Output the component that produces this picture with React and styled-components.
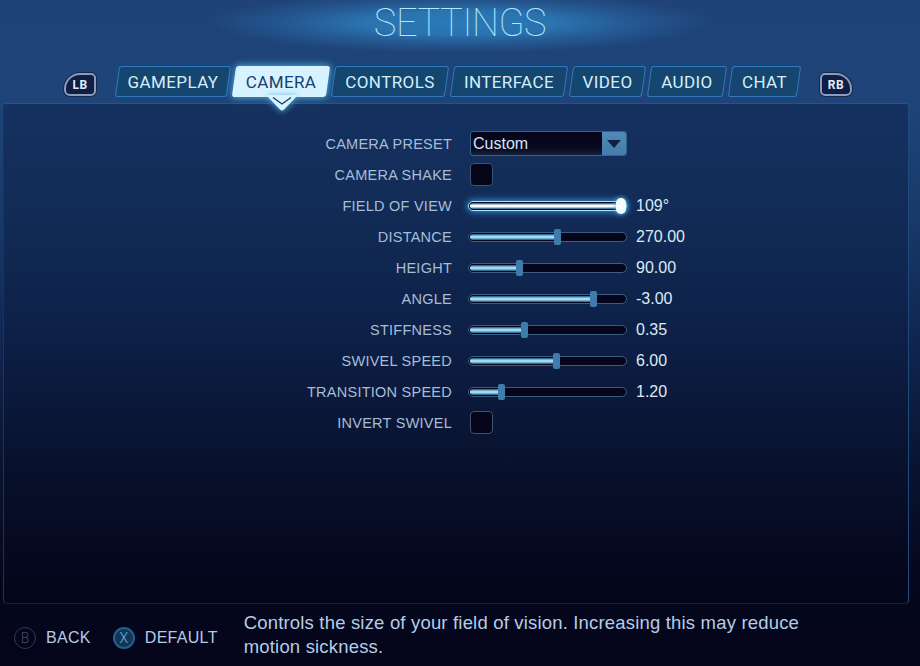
import React from 'react'
import styled, { createGlobalStyle, css } from 'styled-components'

const GlobalStyle = createGlobalStyle`
  html, body {
    margin: 0;
    padding: 0;
    background: #05061a;
  }
`

const Page = styled.div`
  width: 920px;
  height: 666px;
  overflow: hidden;
  display: flex;
  flex-direction: column;
  font-family: "Liberation Sans", Arial, sans-serif;
  background: linear-gradient(
    180deg,
    #1f4379 0%,
    #1e4479 16%,
    #183a6a 32%,
    #0f2550 52%,
    #091430 70%,
    #05071e 86%,
    #04051a 100%
  );
`

const Header = styled.header`
  height: 66px;
  display: flex;
  justify-content: center;
  align-items: flex-start;
  background: radial-gradient(
    ellipse 250px 30px at 460px 23px,
    #2b79b6 0%,
    #2a74b0 38%,
    rgba(42, 105, 165, 0.55) 68%,
    rgba(42, 100, 160, 0) 100%
  );
`

const Title = styled.h1`
  margin: 0;
  font-family: Roboto, sans-serif;
  font-weight: 100;
  font-size: 38px;
  line-height: 47px;
  letter-spacing: -0.4px;
  color: #b4e8fc;
`

const TabRow = styled.nav`
  height: 31px;
  margin-bottom: 6px;
  padding-left: 64px;
  display: flex;
  align-items: stretch;
  position: relative;
  z-index: 2;
`

const Tabs = styled.div`
  margin: 0 21px 0 21px;
  display: flex;
  gap: 5px;
`

const Tab = styled.div`
  position: relative;
  isolation: isolate;
  width: ${p => p.$width}px;
  display: flex;
  align-items: center;
  justify-content: center;
  font-family: Roboto, sans-serif;
  font-size: 17px;
  letter-spacing: 0.4px;
  color: ${p => (p.$active ? '#16406f' : '#d5eefa')};

  &::before {
    content: '';
    position: absolute;
    inset: 0;
    z-index: -1;
    transform: skewX(-8deg);
    border-radius: 3px;
    ${p =>
      p.$active
        ? css`
            background: #d6f3ff;
            box-shadow: 0 0 7px 1px #4aa7dc;
          `
        : css`
            background: #14466f;
            border: 1px solid #2e7cbd;
          `}
  }
`

const TabPointer = styled.svg`
  position: absolute;
  left: 50%;
  top: 100%;
  width: 38px;
  height: 17px;
  margin-left: -18px;
  margin-top: -2px;
  filter: drop-shadow(0 1px 3px #4aa7dc);
`

const Bumper = styled.div`
  align-self: flex-end;
  margin-bottom: 1px;
  width: 32px;
  height: 23px;
  box-sizing: border-box;
  display: flex;
  align-items: center;
  justify-content: center;
  font-family: Roboto, sans-serif;
  font-size: 12px;
  font-weight: 700;
  letter-spacing: 0.5px;
  color: #e4ebf4;
  background: #101d45;
  border: 2px solid #8b9cb8;
  border-radius: ${p => (p.$right ? '5px 16px 6px 5px' : '16px 5px 5px 6px')};
  box-shadow: 0 0 0 1px #16294f;
`

const Panel = styled.main`
  flex: 1;
  margin: 0 11px 0 3px;
  padding-top: 24px;
  border: 1px solid #25548a;
  border-radius: 4px;
  background: linear-gradient(
    180deg,
    rgba(8, 22, 60, 0.42) 0%,
    rgba(8, 18, 48, 0.35) 50%,
    rgba(3, 4, 22, 0.3) 100%
  );
  border-color: #25548a #1f4a7e #0e2240 #163560;
  display: flex;
  flex-direction: column;
`

const Row = styled.div`
  height: 31px;
  display: grid;
  grid-template-columns: 448px 158px auto;
  column-gap: 17px;
  align-items: center;
`

const Label = styled.label`
  text-align: right;
  font-size: 14.5px;
  letter-spacing: 0.25px;
  color: #a6bdd6;
`

const Value = styled.span`
  margin-left: -8px;
  font-size: 16px;
  color: #dde9f4;
`

const Select = styled.div`
  height: 25px;
  margin-left: 1px;
  box-sizing: border-box;
  display: flex;
  align-items: stretch;
  border-radius: 3px;
  border: 1px solid #35618c;
  background: linear-gradient(180deg, #04041a 0%, #08081f 70%, #14203a 100%);
  overflow: hidden;
`

const SelectText = styled.span`
  flex: 1;
  padding-left: 2px;
  line-height: 23px;
  font-size: 16px;
  color: #d6e6f5;
`

const SelectButton = styled.span`
  width: 24px;
  display: flex;
  align-items: center;
  justify-content: center;
  background: linear-gradient(180deg, #4f8ab9 0%, #447cab 100%);

  &::after {
    content: '';
    border-left: 7px solid transparent;
    border-right: 7px solid transparent;
    border-top: 8px solid #10213f;
  }
`

const Checkbox = styled.div`
  width: 23px;
  height: 23px;
  margin-left: 1px;
  box-sizing: border-box;
  border: 1px solid #3d536f;
  border-radius: 4px;
  background: #05051a;
`

const Track = styled.div`
  position: relative;
  height: 10px;
  box-sizing: border-box;
  margin-left: -1px;
  padding: 1px;
  border: 1px solid ${p => (p.$focused ? '#a8e4fa' : '#3f5c7e')};
  border-radius: 5px;
  background: #05061c;
  box-shadow: ${p => (p.$focused ? '0 0 6px 1px #2f95d6' : 'none')};
`

const Fill = styled.div`
  height: 100%;
  border-radius: 4px 0 0 4px;
  background: linear-gradient(
    180deg,
    #1c4f7b 0%,
    ${p => (p.$focused ? '#f4fcff' : '#9edcf4')} 38%,
    ${p => (p.$focused ? '#f4fcff' : '#9edcf4')} 62%,
    #1c4f7b 100%
  );
`

const Thumb = styled.div`
  position: absolute;
  top: -4px;
  width: ${p => (p.$focused ? 10 : 7)}px;
  height: 16px;
  margin-left: ${p => (p.$focused ? -5 : -3)}px;
  border-radius: ${p => (p.$focused ? 5 : 2)}px;
  background: ${p => (p.$focused ? '#f6fdff' : '#3f7cab')};
  box-shadow: ${p => (p.$focused ? '0 0 5px #6cc4ef' : 'none')};
`

const Footer = styled.footer`
  height: 62px;
  padding-left: 14px;
  display: flex;
  align-items: center;
`

const Hint = styled.div`
  display: flex;
  align-items: center;
  gap: 10px;
  margin-top: 6px;
  margin-right: ${p => p.$gap}px;
  font-size: 16px;
  letter-spacing: 0.3px;
  color: #b5cbe4;
`

const ButtonGlyph = styled.span`
  width: 22px;
  height: 22px;
  box-sizing: border-box;
  border-radius: 50%;
  display: flex;
  align-items: center;
  justify-content: center;
  font-family: Roboto, sans-serif;
  font-weight: 300;
  font-size: 14px;
  letter-spacing: 0;
  ${p =>
    p.$filled
      ? css`
          border: 2px solid #235f92;
          background: #123653;
          color: #6fb4e2;
        `
      : css`
          border: 1px solid #2c3a52;
          color: #3f5069;
        `}
`

const Description = styled.p`
  margin: 0;
  width: 590px;
  font-size: 18.5px;
  line-height: 24px;
  letter-spacing: 0.18px;
  color: #b5cde6;
`

const tabs = [
  { name: 'GAMEPLAY', width: 112 },
  { name: 'CAMERA', width: 94 },
  { name: 'CONTROLS', width: 114 },
  { name: 'INTERFACE', width: 114 },
  { name: 'VIDEO', width: 73 },
  { name: 'AUDIO', width: 76 },
  { name: 'CHAT', width: 69 },
].map(tab => ({ ...tab, active: tab.name === 'CAMERA' }))

const sliders = [
  { label: 'FIELD OF VIEW', value: '109°', percent: 96.5, focused: true },
  { label: 'DISTANCE', value: '270.00', percent: 56 },
  { label: 'HEIGHT', value: '90.00', percent: 32 },
  { label: 'ANGLE', value: '-3.00', percent: 79 },
  { label: 'STIFFNESS', value: '0.35', percent: 35 },
  { label: 'SWIVEL SPEED', value: '6.00', percent: 55.5 },
  { label: 'TRANSITION SPEED', value: '1.20', percent: 20.5 },
]

const Slider = ({ label, value, percent, focused }) => (
  <Row>
    <Label>{label}</Label>
    <Track $focused={focused}>
      <Fill $focused={focused} style={{ width: `${percent}%` }} />
      <Thumb $focused={focused} style={{ left: `${percent}%` }} />
    </Track>
    <Value>{value}</Value>
  </Row>
)

export default function App() {
  return (
    <Page>
      <GlobalStyle />
      <Header>
        <Title>SETTINGS</Title>
      </Header>
      <TabRow>
        <Bumper>LB</Bumper>
        <Tabs>
          {tabs.map(tab => (
            <Tab key={tab.name} $width={tab.width} $active={tab.active}>
              {tab.name}
              {tab.active && (
                <TabPointer viewBox="0 0 38 17">
                  <path d="M3 0H35L21 14.5Q19 16.5 17 14.5Z" fill="#d6f3ff" />
                  <path d="M10 2.5L19 9L28 2.5" fill="none" stroke="#1d3d6c" strokeWidth="1.4" />
                </TabPointer>
              )}
            </Tab>
          ))}
        </Tabs>
        <Bumper $right>RB</Bumper>
      </TabRow>
      <Panel>
        <Row>
          <Label>CAMERA PRESET</Label>
          <Select>
            <SelectText>Custom</SelectText>
            <SelectButton />
          </Select>
        </Row>
        <Row>
          <Label>CAMERA SHAKE</Label>
          <Checkbox />
        </Row>
        {sliders.map(slider => (
          <Slider key={slider.label} {...slider} />
        ))}
        <Row>
          <Label>INVERT SWIVEL</Label>
          <Checkbox />
        </Row>
      </Panel>
      <Footer>
        <Hint $gap={22}>
          <ButtonGlyph>B</ButtonGlyph>
          BACK
        </Hint>
        <Hint $gap={26}>
          <ButtonGlyph $filled>X</ButtonGlyph>
          DEFAULT
        </Hint>
        <Description>
          Controls the size of your field of vision. Increasing this may reduce motion sickness.
        </Description>
      </Footer>
    </Page>
  )
}
